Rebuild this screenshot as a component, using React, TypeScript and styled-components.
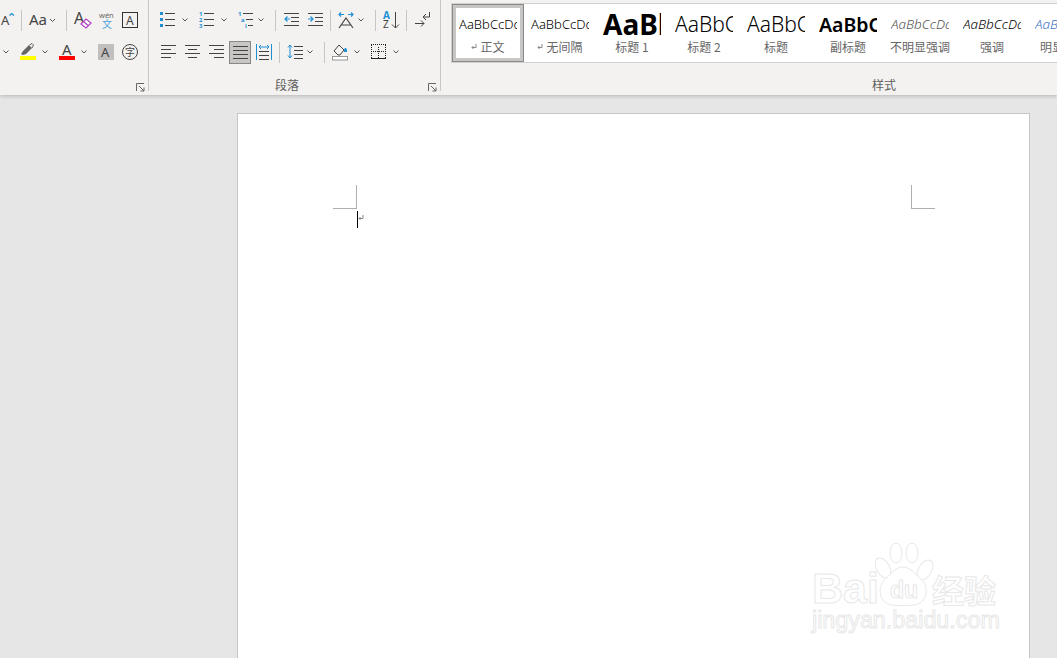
import React from "react";
import styled, { createGlobalStyle } from "styled-components";

const Global = createGlobalStyle`
  html, body { margin: 0; padding: 0; height: 100%; overflow: hidden; background: #e6e6e6; }
  #root { height: 100%; }
  svg { overflow: visible; }
`;
const Shell = styled.div`
  width: 1057px; height: 658px; overflow: hidden; background: #e6e6e6; display: flex; flex-direction: column;
  font-family: "Noto Sans CJK SC", "Noto Sans", sans-serif;
`;
const Ribbon = styled.div`
  height: 95px; flex: none; display: flex; background: #f3f2f1; position: relative; z-index: 2;
  box-shadow: 0 1px 4px rgba(0,0,0,.22);
`;
const Group = styled.section<{ $w: number }>`
  width: ${p => p.$w}px; flex: none; height: 91px; box-sizing: border-box; border-right: 1px solid #c8c6c4; position: relative;
  display: flex; flex-direction: column;
`;
const Rows = styled.div`display: flex; flex-direction: column; gap: 10px; padding-top: 9px;`;
const Row = styled.div`display: flex; align-items: center; height: 22px;`;
const Tool = styled.span<{ $w: number; $g: number }>`
  display: flex; align-items: center; justify-content: center; flex: none;
  width: ${p => p.$w}px; margin-left: ${p => p.$g}px;
`;
const Sep = styled.i<{ $g: number }>`
  display: block; flex: none; width: 1px; height: 21px; background: #c8c6c4; margin-left: ${p => p.$g}px;
`;
const Pressed = styled.span<{ $g: number }>`
  display: flex; align-items: center; justify-content: center; flex: none; box-sizing: border-box; align-self: flex-start;
  width: 22px; height: 23px; margin-left: ${p => p.$g}px; background: #c8c6c4; border: 1px solid #8a8886;
`;
const GroupLabel = styled.div<{ $pr?: number }>`
  position: absolute; left: 0; right: ${p => p.$pr || 0}px; top: 77px; text-align: center; font-size: 12px; line-height: 16px; color: #605e5c;
`;
const Launcher = styled.span`position: absolute; right: 3px; top: 83px; width: 9px; height: 9px; display: flex;`;
const StylesGroup = styled.section`flex: none; width: 886px; position: relative; padding: 3px 0 0 10px; box-sizing: border-box;`;
const Gallery = styled.div`
  display: flex; height: 58px; border: 1px solid #d2d0ce; border-right: 0; background: #fff; overflow: hidden;
`;
const StyleItem = styled.div<{ $on?: boolean }>`
  width: 72px; flex: none; height: 58px; box-sizing: border-box; display: flex; flex-direction: column; align-items: center;
  padding-top: ${p => (p.$on ? 5 : 6)}px;
  border: ${p => (p.$on ? "1px solid #8a8a8a" : "0")};
  outline: ${p => (p.$on ? "3px solid #c8c6c4" : "0")};
  outline-offset: -4px;
`;
const Preview = styled.div<{ $size: number; $weight: number; $it?: boolean; $color?: string }>`
  width: 58px; height: 28px; flex: none; overflow: hidden; white-space: nowrap; display: flex; align-items: center;
  font-family: "Noto Sans", sans-serif;
  font-size: ${p => p.$size}px; font-weight: ${p => p.$weight};
  font-style: ${p => (p.$it ? "italic" : "normal")}; color: ${p => p.$color || "#000"};
`;
const StyleName = styled.div`
  margin-top: 1px; font-size: 12px; line-height: 15px; color: #666; white-space: nowrap; display: flex; align-items: center; gap: 3px;
`;
const Canvas = styled.main`flex: 1; position: relative; padding: 18px 0 0 237px; min-height: 0;`;
const Page = styled.div`
  width: 793px; height: 600px; background: #fff; border: 1px solid #c6c6c6; box-sizing: border-box;
  padding: 71px 94px 0 95px;
`;
const MarginRow = styled.div`display: flex; justify-content: space-between; height: 24px;`;
const Corner = styled.i<{ $right?: boolean }>`
  display: block; width: 23px; height: 23px; box-sizing: content-box; border-bottom: 1px solid #b0b0b0;
  ${p => (p.$right ? "border-left: 1px solid #b0b0b0;" : "border-right: 1px solid #b0b0b0;")}
`;
const CursorLine = styled.div`display: flex; align-items: flex-start; padding: 2px 0 0 24px;`;
const Caret = styled.i`display: block; width: 1px; height: 17px; background: #000;`;
const MarkSlot = styled.span`display: block; margin-top: 3px; line-height: 0;`;
const Watermark = styled.div`position: absolute; left: 810px; top: 445px; width: 195px; height: 100px;`;

const D = "#444";
const B = "#1e8fd5";
const L = ({ x, y, w, c = D }: { x: number; y: number; w: number; c?: string }) => <rect x={x} y={y} width={w} height={1} fill={c} />;
const Chev = () => (
  <svg width="6" height="4" viewBox="0 0 6 4"><path d="M.5.5 3 3 5.5.5" fill="none" stroke="#555" strokeWidth="1" /></svg>
);
const Glyph = ({ x, y, s, c = D, children, w = 400 }: { x: number; y: number; s: number; c?: string; children: string; w?: number }) => (
  <text x={x} y={y} fontSize={s} fill={c} fontWeight={w} fontFamily="'Noto Sans','Noto Sans CJK SC',sans-serif">{children}</text>
);
const Ic = ({ w = 16, h = 20, children }: { w?: number; h?: number; children: React.ReactNode }) => (
  <svg width={w} height={h} viewBox={`0 0 ${w} ${h}`}>{children}</svg>
);
const Lines = ({ spec }: { spec: [number, number][] }) => (
  <Ic w={15} h={16}>{spec.map(([x, w], i) => <rect key={i} x={x} y={1 + i * 4} width={w} height={1} fill={D} />)}</Ic>
);

const GrowFont = () => (
  <Ic><Glyph x={1} y={15} s={13}>A</Glyph><path d="M9.5 5.5 11.7 3.5 14 5.5" fill="none" stroke={B} strokeWidth="1.3" /></Ic>
);
const CaseIc = () => (
  <svg width="28" height="20" viewBox="0 0 28 20"><Glyph x={0} y={15} s={15}>Aa</Glyph><path d="M21 9l2.5 2.5L26 9" fill="none" stroke="#555" /></svg>
);
const ClearFmt = () => (
  <Ic w={20}><Glyph x={1} y={14} s={16}>A</Glyph><path d="M8 14l5-5 5 4-5 5z" fill="#fff" stroke="#b146c2" strokeWidth="1.3" /><path d="M10.5 11.5l4.5 4" stroke="#b146c2" strokeWidth="1.3" /></Ic>
);
const Wen = () => (
  <Ic><Glyph x={1} y={8} s={7.5} c="#666">wén</Glyph><Glyph x={4} y={18} s={10} c="#4aa3df">文</Glyph></Ic>
);
const BoxA = () => (
  <Ic><rect x=".5" y="2.5" width="15" height="15" fill="none" stroke="#333" /><Glyph x={4} y={14.5} s={12}>A</Glyph></Ic>
);
const Highlight = () => (
  <Ic h={18}><path d="M1 11l2-3 6-6 3 3-6 6-3 1z" fill="#666" /><path d="M9.5 2 12 .5l1.5 1.5L12 5" fill="none" stroke="#666" /><rect x="0" y="13" width="16" height="4" fill="#ffff00" /></Ic>
);
const RedA = () => (
  <Ic h={18}><Glyph x={3} y={12} s={15}>A</Glyph><rect x="0" y="13" width="16" height="4" fill="#ff0000" /></Ic>
);
const GrayA = () => (
  <Ic><rect x="0" y="2" width="16" height="16" fill="#c0bfbd" /><Glyph x={3} y={15} s={13}>A</Glyph></Ic>
);
const Zi = () => (
  <Ic><circle cx="8" cy="10" r="7.5" fill="none" stroke="#444" /><Glyph x={3} y={14} s={10}>字</Glyph></Ic>
);
const Bullets = () => (
  <Ic w={15} h={16}>
    {[1, 7, 13].map(y => <rect key={y} x="0" y={y - 1} width="3" height="3" fill={B} />)}
    {[1, 7, 13].map(y => <L key={y} x={5} y={y} w={10} />)}
  </Ic>
);
const Numbered = () => (
  <Ic w={15} h={16}>
    {([["1", 4], ["2", 10], ["3", 16]] as [string, number][]).map(([n, y]) => <Glyph key={n} x={0} y={y} s={6} c={B} w={700}>{n}</Glyph>)}
    {[1, 7, 13].map(y => <L key={y} x={5} y={y} w={10} />)}
  </Ic>
);
const Multi = () => (
  <Ic w={15} h={16}>
    <Glyph x={0} y={4} s={6} c={B} w={700}>1</Glyph><Glyph x={3} y={10} s={6} c={B} w={700}>a</Glyph><Glyph x={7} y={16} s={6} c={B} w={700}>i</Glyph>
    <L x={5} y={1} w={10} /><L x={8} y={7} w={7} /><L x={10} y={13} w={5} />
  </Ic>
);
const Outdent = () => (
  <Ic w={15} h={16}>
    <L x={0} y={1} w={15} /><L x={7} y={5} w={8} /><L x={7} y={9} w={8} /><L x={0} y={13} w={15} />
    <path d="M6 7H1M3.5 4.5 1 7l2.5 2.5" fill="none" stroke={B} strokeWidth="1.2" />
  </Ic>
);
const Indent = () => (
  <Ic w={15} h={16}>
    <L x={0} y={1} w={15} /><L x={7} y={5} w={8} /><L x={7} y={9} w={8} /><L x={0} y={13} w={15} />
    <path d="M0 7h5M2.5 4.5 5 7 2.5 9.5" fill="none" stroke={B} strokeWidth="1.2" />
  </Ic>
);
const WidthA = () => (
  <Ic h={18}>
    <path d="M1 17 8 7l7 10M3.5 14h9" fill="none" stroke={D} strokeWidth="1.2" />
    <path d="M6 3.5H1M3 1.5 1 3.5l2 2M10 3.5h5M13 1.5l2 2-2 2" fill="none" stroke={B} strokeWidth="1.2" />
  </Ic>
);
const Sort = () => (
  <Ic h={20}>
    <Glyph x={0} y={9} s={10} c={B} w={700}>A</Glyph><Glyph x={0} y={18} s={10}>Z</Glyph>
    <path d="M12.5 2v16M9 14.5l3.5 3.5 3.5-3.5" fill="none" stroke={D} />
  </Ic>
);
const EnterIc = () => (
  <Ic w={18} h={18}>
    <path d="M1 12.5h9M7 9.5l3 3-3 3" fill="none" stroke={D} />
    <path d="M15.5 1v5H9M12 3 9 6l3 3" fill="none" stroke={D} />
  </Ic>
);
const Justify = () => <Lines spec={[[0, 15], [0, 15], [0, 15], [0, 15]]} />;
const Distributed = () => (
  <Ic h={18}>
    <rect x="0" y="1" width="1" height="16" fill={B} /><rect x="15" y="1" width="1" height="16" fill={B} />
    <path d="M3 4h10M5 2 3 4l2 2M11 2l2 2-2 2" fill="none" stroke={B} />
    <L x={3} y={8} w={10} /><L x={3} y={12} w={10} /><L x={3} y={16} w={10} />
  </Ic>
);
const Spacing = () => (
  <Ic h={18}>
    <path d="M3 2v13M1 4.5 3 2l2 2.5M1 12.5 3 15l2-2.5" fill="none" stroke={B} />
    <L x={7} y={3} w={9} /><L x={7} y={7} w={9} /><L x={7} y={11} w={9} /><L x={7} y={15} w={9} />
  </Ic>
);
const Fill = () => (
  <Ic h={18}>
    <path d="M2 8l5-6 5 5-4 5H6z" fill="none" stroke={D} /><path d="M12 7c1-3 2-3 3 0v2h-3z" fill={B} />
    <rect x=".5" y="13.5" width="15" height="3.5" fill="#fff" stroke="#999" />
  </Ic>
);
const Borders = () => (
  <Ic w={15} h={16}>
    <path d="M0 .5h15M.5 1v13M14.5 1v13M7.5 3v11M2 7.5h12" fill="none" stroke="#222" strokeDasharray="1 1" shapeRendering="crispEdges" />
    <rect x="0" y="14" width="15" height="1" fill="#222" />
  </Ic>
);
const LaunchIc = () => (
  <svg width="9" height="9" viewBox="0 0 9 9"><path d="M.5 8V.5H8M3 3l5 5M8 4.5V8H4.5" fill="none" stroke="#666" /></svg>
);
const ReturnMark = () => (
  <svg width="6" height="6" viewBox="0 0 6 6"><path d="M5 0v3.5H1M2.5 2 1 3.5 2.5 5" fill="none" stroke="#888" /></svg>
);

const styleData = [
  { n: "正文", s: 13, w: 300, on: true, mark: true },
  { n: "无间隔", s: 13, w: 300, mark: true },
  { n: "标题 1", s: 28, w: 700, t: "AaBb" },
  { n: "标题 2", s: 21, w: 300, t: "AaBbC" },
  { n: "标题", s: 21, w: 300, t: "AaBbC" },
  { n: "副标题", s: 19.5, w: 600, t: "AaBbC" },
  { n: "不明显强调", s: 13.5, w: 300, it: true, c: "#555" },
  { n: "强调", s: 13.5, w: 300, it: true },
  { n: "明显强调", s: 13.5, w: 300, it: true, c: "#4472c4" },
];

export default function App() {
  return (
    <Shell>
      <Global />
      <Ribbon>
        <Group $w={149}>
          <Rows>
            <Row>
              <Tool $g={0} $w={16}><GrowFont /></Tool><Sep $g={5} />
              <Tool $g={7} $w={28}><CaseIc /></Tool><Sep $g={9} />
              <Tool $g={6} $w={20}><ClearFmt /></Tool>
              <Tool $g={5} $w={16}><Wen /></Tool>
              <Tool $g={8} $w={16}><BoxA /></Tool>
            </Row>
            <Row>
              <Tool $g={3} $w={6}><Chev /></Tool>
              <Tool $g={11} $w={16}><Highlight /></Tool>
              <Tool $g={6} $w={6}><Chev /></Tool>
              <Tool $g={11} $w={16}><RedA /></Tool>
              <Tool $g={6} $w={6}><Chev /></Tool>
              <Tool $g={11} $w={16}><GrayA /></Tool>
              <Tool $g={8} $w={16}><Zi /></Tool>
            </Row>
          </Rows>
          <Launcher><LaunchIc /></Launcher>
        </Group>
        <Group $w={292}>
          <Rows>
            <Row>
              <Tool $g={11} $w={15}><Bullets /></Tool><Tool $g={7} $w={6}><Chev /></Tool>
              <Tool $g={11} $w={15}><Numbered /></Tool><Tool $g={7} $w={6}><Chev /></Tool>
              <Tool $g={11} $w={15}><Multi /></Tool><Tool $g={5} $w={6}><Chev /></Tool>
              <Sep $g={11} />
              <Tool $g={8} $w={15}><Outdent /></Tool><Tool $g={9} $w={15}><Indent /></Tool>
              <Sep $g={7} />
              <Tool $g={7} $w={16}><WidthA /></Tool><Tool $g={4} $w={6}><Chev /></Tool>
              <Sep $g={11} />
              <Tool $g={7} $w={16}><Sort /></Tool>
              <Sep $g={7} />
              <Tool $g={7} $w={18}><EnterIc /></Tool>
            </Row>
            <Row>
              <Tool $g={12} $w={15}><Lines spec={[[0, 15], [0, 10], [0, 15], [0, 10]]} /></Tool>
              <Tool $g={9} $w={15}><Lines spec={[[0, 15], [3, 9], [0, 15], [3, 9]]} /></Tool>
              <Tool $g={9} $w={15}><Lines spec={[[0, 15], [5, 10], [0, 15], [5, 10]]} /></Tool>
              <Pressed $g={5}><Justify /></Pressed>
              <Tool $g={5} $w={16}><Distributed /></Tool>
              <Sep $g={7} />
              <Tool $g={7} $w={16}><Spacing /></Tool><Tool $g={4} $w={6}><Chev /></Tool>
              <Sep $g={11} />
              <Tool $g={7} $w={16}><Fill /></Tool><Tool $g={6} $w={6}><Chev /></Tool>
              <Tool $g={11} $w={15}><Borders /></Tool><Tool $g={7} $w={6}><Chev /></Tool>
            </Row>
          </Rows>
          <GroupLabel $pr={15}>段落</GroupLabel>
          <Launcher><LaunchIc /></Launcher>
        </Group>
        <StylesGroup>
          <Gallery>
            {styleData.map(s => (
              <StyleItem key={s.n} $on={s.on}>
                <Preview $size={s.s} $weight={s.w} $it={s.it} $color={s.c}>{s.t || "AaBbCcDd"}</Preview>
                <StyleName>{s.mark && <ReturnMark />}{s.n}</StyleName>
              </StyleItem>
            ))}
          </Gallery>
          <GroupLabel>样式</GroupLabel>
        </StylesGroup>
      </Ribbon>
      <Canvas>
        <Page>
          <MarginRow><Corner /><Corner $right /></MarginRow>
          <CursorLine><Caret /><MarkSlot><ReturnMark /></MarkSlot></CursorLine>
        </Page>
        <Watermark>
          <svg width="195" height="100" viewBox="0 0 195 100" fill="#fff" stroke="#e8e8e8" strokeWidth="1">
            <text x="2" y="63" fontSize="43" fontWeight="700" fontFamily="'Liberation Sans',sans-serif">Bai</text>
            <ellipse cx="73" cy="28" rx="6.5" ry="11" transform="rotate(-30 73 28)" />
            <ellipse cx="86" cy="13" rx="6" ry="10" /><ellipse cx="102" cy="13" rx="6" ry="10" />
            <ellipse cx="115" cy="30" rx="6.5" ry="11" transform="rotate(30 115 30)" />
            <path d="M93 27c7 0 11 6 17 11 10 8 8 25-6 27-7 1-15 1-22 0-14-2-15-19-6-27 6-5 10-11 17-11z" />
            <text x="80" y="58" fontSize="23" fontWeight="700" fontFamily="'Liberation Sans',sans-serif">du</text>
            <text x="122" y="63" fontSize="32" fontWeight="700" fontFamily="'Noto Sans CJK SC',sans-serif">经验</text>
            <text x="2" y="88" fontSize="23.3" fontFamily="'Liberation Sans',sans-serif">jingyan.baidu.com</text>
          </svg>
        </Watermark>
      </Canvas>
    </Shell>
  );
}
